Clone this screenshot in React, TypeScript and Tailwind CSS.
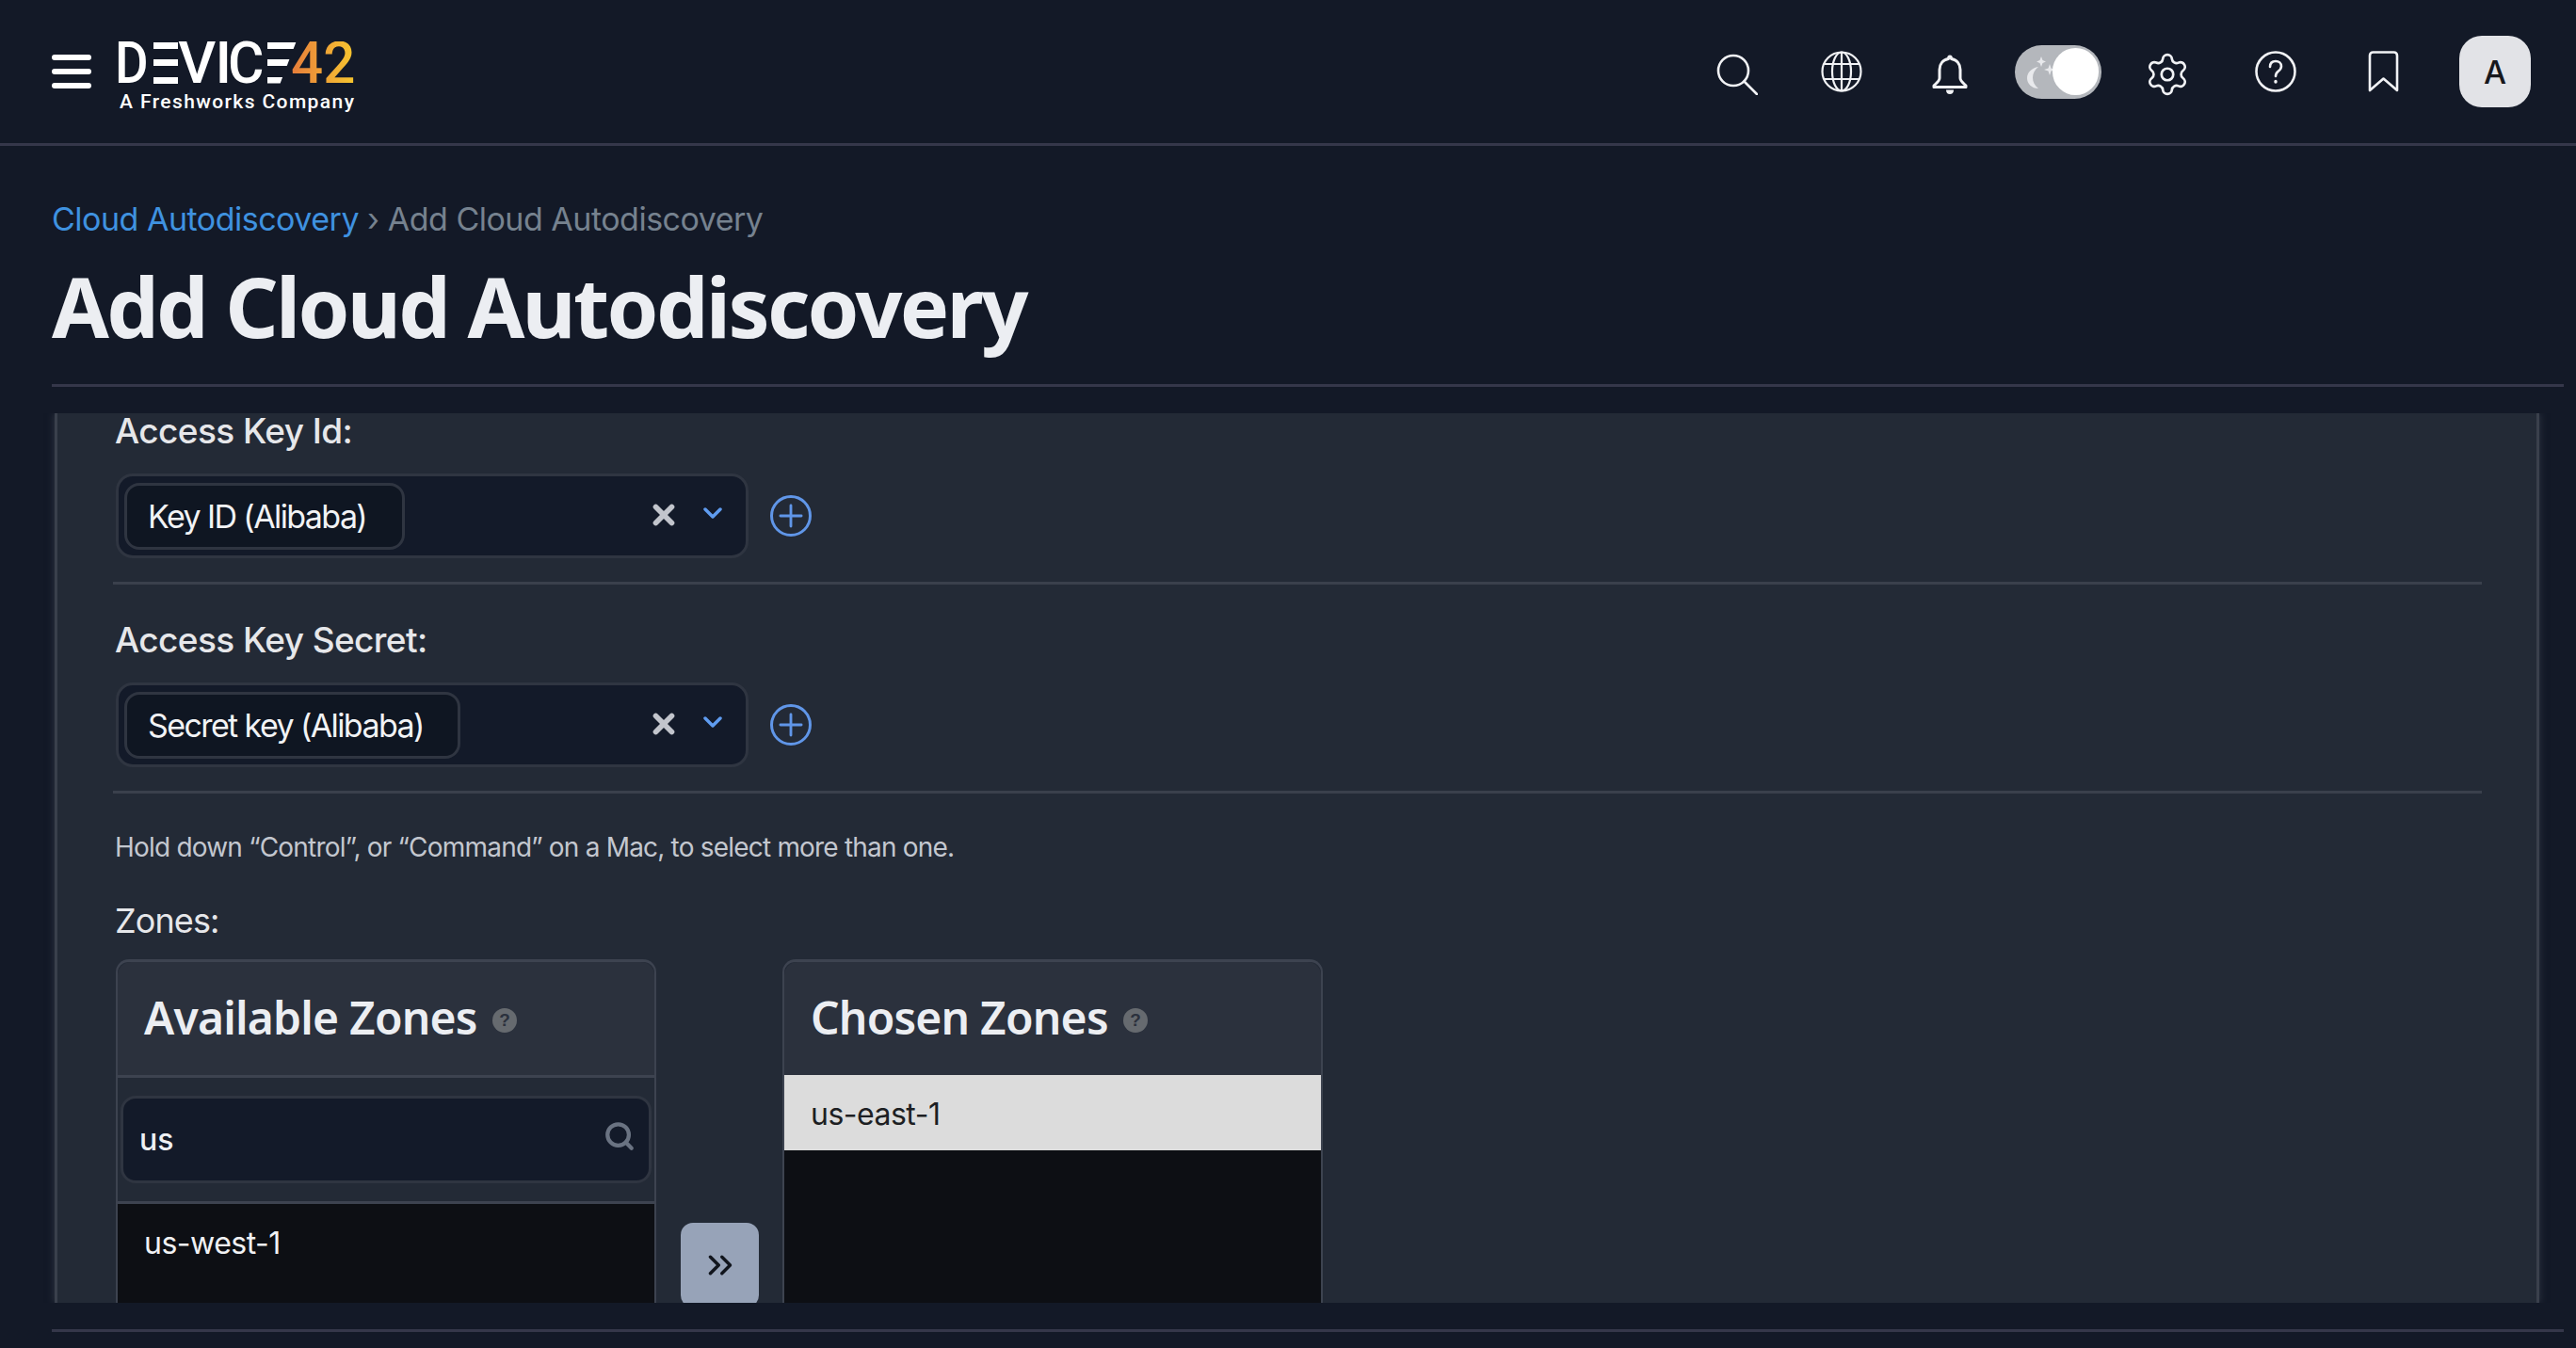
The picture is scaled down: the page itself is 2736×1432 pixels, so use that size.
import React from "react";
import { ChevronDown, ChevronsRight, Plus, Search, X } from "lucide-react";

const Bars = ({ width, className = "" }: { width: number; className?: string }) => (
  <div className={`flex h-[44px] flex-col justify-between ${className}`} style={{ width }} aria-hidden="true">
    <div className="h-[7px] bg-white" />
    <div className="h-[7px] bg-white" />
    <div className="h-[7px] bg-white" />
  </div>
);

const Logo = () => (
  <div className="mt-[12px] ml-[30px] flex w-[252px] flex-col">
    <div className="flex h-[46px] items-center font-['Roboto',sans-serif] text-[62px] leading-[46px] font-medium text-white">
      <span className="ml-[-5px] inline-block w-[43px] origin-left scale-x-[0.88]">D</span>
      <Bars width={27} />
      <span className="w-[44px]">V</span>
      <span className="ml-[-3px] w-[17px]">I</span>
      <span className="ml-[-4px] inline-block w-[44px] origin-left scale-x-[0.95]">C</span>
      <Bars width={32} className="[clip-path:polygon(0_0,100%_0,45%_100%,0_100%)]" />
      <span className="ml-[-6px] inline-block origin-left scale-x-[0.97] bg-gradient-to-r from-[#e67c3a] to-[#f6c62e] bg-clip-text text-transparent">42</span>
    </div>
    <div className="mt-[5px] font-['Roboto',sans-serif] text-[21px] leading-[26px] font-medium tracking-[1.4px] text-white">
      A Freshworks Company
    </div>
  </div>
);

const HeaderIcons = () => (
  <div className="ml-auto flex items-center pr-[48px] text-[#f1f2f5]">
    <svg className="mt-[5px]" width="44" height="44" viewBox="0 0 44 44" fill="none" stroke="currentColor" strokeWidth="2.6" strokeLinecap="round">
      <circle cx="18" cy="18" r="16" />
      <path d="M29.5 29.5 43 43" />
    </svg>
    <svg className="ml-[67px]" width="44" height="44" viewBox="0 0 44 44" fill="none" stroke="currentColor" strokeWidth="2.2">
      <circle cx="22" cy="22" r="20.5" />
      <ellipse cx="22" cy="22" rx="10" ry="20.5" />
      <path d="M22 1.5v41M3.500 14h37M3.500 30h37" />
    </svg>
    <svg className="ml-[74px] mt-[6px]" width="38" height="44" viewBox="0 0 38 44" fill="none" stroke="currentColor" strokeWidth="3" strokeLinejoin="round">
      <path d="M19 3c-1 0-1.500 1-1.500 2.500C11.500 6.500 8 11 8 17v9c0 3-3 5-6 8v1.500h34V34c-3-3-6-5-6-8v-9c0-6-3.500-10.500-9.500-11.500C20.500 4 20 3 19 3Z" />
      <path d="M15 38.500h8c0 3-1.500 4.500-4 4.500s-4-1.500-4-4.500Z" fill="currentColor" stroke="none" />
    </svg>
    <div className="relative ml-[50px] h-[57px] w-[92px] rounded-full bg-[#b4b7bc]">
      <svg className="absolute top-[12px] left-[10px]" width="34" height="36" viewBox="0 0 34 36" fill="#e8e9ec">
        <path d="M15 11C8 12 3 17 3 23s5 11 12 11c-4-3-6-7-6-11.500S11 14 15 11Z" />
        <path d="M18 0l1.500 4L23 5.500 19.500 7 18 11l-1.500-4L13 5.500 16.500 4Z" />
        <path d="M27 8l1.500 4.500L33 14l-4.500 1.500L27 20l-1.500-4.500L21 14l4.500-1.500Z" />
      </svg>
      <div className="absolute top-[3px] right-[3px] h-[50px] w-[49px] rounded-full bg-white" />
    </div>
    <svg className="ml-[45px] mt-[6px]" width="50" height="50" viewBox="0 0 24 24" fill="none" stroke="currentColor" strokeWidth="1.3" strokeLinecap="round" strokeLinejoin="round">
      <path d="M9.671 4.136a2.34 2.34 0 0 1 4.659 0 2.34 2.34 0 0 0 3.319 1.915 2.34 2.34 0 0 1 2.33 4.033 2.34 2.34 0 0 0 0 3.831 2.34 2.34 0 0 1-2.33 4.033 2.34 2.34 0 0 0-3.319 1.915 2.34 2.34 0 0 1-4.659 0 2.34 2.34 0 0 0-3.32-1.915 2.34 2.34 0 0 1-2.33-4.033 2.34 2.34 0 0 0 0-3.831A2.34 2.34 0 0 1 6.35 6.051a2.34 2.34 0 0 0 3.319-1.915" />
      <circle cx="12" cy="12" r="3" />
    </svg>
    <svg className="ml-[68px]" width="44" height="44" viewBox="0 0 44 44" fill="none" stroke="currentColor" strokeWidth="2.6" strokeLinecap="round" strokeLinejoin="round">
      <circle cx="22" cy="22" r="20.500" />
      <path d="M16 17c0-4 2.500-6 6-6s6 2 6 5.500c0 2.500-1.500 3.800-3.300 5.200C23 23 22 24 22 27" />
      <path d="M22 32.500v.5" strokeWidth="3.4" />
    </svg>
    <svg className="ml-[76px]" width="33" height="44" viewBox="0 0 33 44" fill="none" stroke="currentColor" strokeWidth="2.6" strokeLinejoin="round">
      <path d="M2 42V5c0-2 1.500-3.500 3.500-3.500h22c2 0 3.500 1.500 3.500 3.500v37L16.500 29.500Z" />
    </svg>
    <div className="ml-[64px] flex h-[76px] w-[76px] items-center justify-center rounded-[24px] bg-[#e2e3e7] font-['Inter',sans-serif] text-[34px] font-medium text-[#17181c]">
      A
    </div>
  </div>
);

const SelectField = ({ label, value, chipWidth, top }: { label: string; value: string; chipWidth: number; top: string }) => (
  <div className={`border-b-[3px] border-[#3a404c] pb-[25px] ${top}`}>
    <div className="ml-[2px] h-[38px] text-[37px] leading-[38px] font-medium tracking-[-0.6px] text-[#e6e7ea]">{label}</div>
    <div className="mt-[26px] flex items-center">
      <div className="ml-[3px] flex h-[90px] w-[672px] items-center rounded-[18px] border-[3px] border-[#2f3541] bg-[#131a29] pl-[6px]">
        <div
          className="flex h-[71px] items-center rounded-[16px] border-[3px] border-[#2f3541] bg-[#0f1622] pl-[22px] text-[34px] tracking-[-1.6px] text-[#f2f3f5]"
          style={{ width: chipWidth }}
        >
          {value}
        </div>
        <X className="mt-[-2px] ml-auto text-[#c2c5cc]" size={34} strokeWidth={4} />
        <ChevronDown className="mt-[-6px] mr-[19px] ml-[19px] text-[#5f9cf0]" size={32} strokeWidth={2.6} />
      </div>
      <div className="ml-[23px] flex h-[44px] w-[44px] items-center justify-center rounded-full border-[3px] border-[#6096e8] text-[#6096e8]">
        <Plus size={38} strokeWidth={1.8} className="shrink-0" />
      </div>
    </div>
  </div>
);

const HelpDot = () => (
  <span className="mt-[6px] ml-[16px] flex h-[26px] w-[26px] items-center justify-center rounded-full bg-[#666a6f] font-['Liberation_Sans',sans-serif] text-[19px] leading-none font-bold text-[#2b313d]">
    ?
  </span>
);

const BoxHeader = ({ title }: { title: string }) => (
  <div className="flex h-[120px] items-center rounded-t-[14px] bg-[#2b313d] pb-[3px] pl-[28px] font-['Noto_Sans',sans-serif] text-[48px] font-semibold tracking-[-0.8px] text-[#eceef2]">
    {title}
    <HelpDot />
  </div>
);

export default function App() {
  return (
    <div className="flex h-[1432px] w-[2736px] flex-col overflow-hidden bg-[#131927] font-['Inter',sans-serif]">
      <header className="flex h-[155px] shrink-0 items-center border-b-[3px] border-[#35374a] pl-[55px]">
        <div className="flex h-[36px] w-[42px] flex-col justify-between">
          <div className="h-[6px] rounded-full bg-white" />
          <div className="h-[6px] rounded-full bg-white" />
          <div className="h-[6px] rounded-full bg-white" />
        </div>
        <Logo />
        <HeaderIcons />
      </header>

      <main className="flex min-h-0 flex-1 flex-col pr-[13px] pl-[55px]">
        <div className="flex h-[256px] shrink-0 flex-col border-b-[3px] border-[#35374a]">
          <div className="mt-[56px] h-[44px] text-[34px] leading-[44px] tracking-[-0.5px] text-[#76828f]">
            <span className="text-[#3f92e0]">Cloud Autodiscovery</span> › Add Cloud Autodiscovery
          </div>
          <h1 className="mt-[22px] font-['Noto_Sans',sans-serif] text-[88px] leading-[96px] font-bold tracking-[-2.7px] text-[#eceef2]">
            Add Cloud Autodiscovery
          </h1>
        </div>

        <section className="mt-[28px] mr-[26px] ml-[3px] h-[945px] shrink-0 border-x-[3px] border-[#3a404c] bg-[#232a36] pr-[58px] pl-[59px] shadow-[0_0_8px_rgba(70,76,90,0.6)] [clip-path:inset(0_-12px_0_-12px)]">
          <SelectField label="Access Key Id:" value="Key ID (Alibaba)" chipWidth={298} top="" />
          <SelectField label="Access Key Secret:" value="Secret key (Alibaba)" chipWidth={357} top="mt-[40px]" />
          <p className="mt-[37px] ml-[2px] text-[28px] leading-[40px] tracking-[-0.8px] text-[#c3c7cf]">
            Hold down “Control”, or “Command” on a Mac, to select more than one.
          </p>
          <div className="mt-[40px] ml-[2px] h-[36px] text-[36px] leading-[36px] tracking-[-0.9px] text-[#e6e7ea]">Zones:</div>

          <div className="mt-[23px] ml-[3px] flex h-[366px] items-start overflow-hidden">
            <div className="w-[574px] rounded-t-[14px] border-x-[2px] border-t-[3px] border-[#3d4350]">
              <BoxHeader title="Available Zones" />
              <div className="border-y-[3px] border-[#3d4350] bg-[#232a36] px-[3px] py-[19px]">
                <div className="flex h-[93px] items-center justify-between rounded-[16px] border-[3px] border-[#2f3541] bg-[#131a29] pr-[14px] pl-[17px] text-[32px] font-medium text-[#eef0f3]">
                  us
                  <Search className="mt-[-8px] text-[#6a7382]" size={34} strokeWidth={3} />
                </div>
              </div>
              <div className="h-[120px] bg-[#0d0f14] px-[28px] pt-[21px] text-[32px] leading-[42px] tracking-[-0.5px] text-[#f0f1f3]">
                us-west-1
              </div>
            </div>

            <div className="mt-[280px] ml-[26px] flex h-[90px] w-[83px] shrink-0 items-center justify-center rounded-[13px] bg-[#97a3b8] text-[#11151d]">
              <ChevronsRight size={42} strokeWidth={2} />
            </div>

            <div className="ml-[25px] w-[574px] rounded-t-[14px] border-x-[2px] border-t-[3px] border-[#3d4350]">
              <BoxHeader title="Chosen Zones" />
              <div className="h-[80px] bg-[#dcdcdc] pt-[21px] pl-[28px] text-[32px] leading-[42px] tracking-[-0.5px] text-[#1d1f23]">
                us-east-1
              </div>
              <div className="h-[170px] bg-[#0d0f14]" />
            </div>
          </div>
        </section>

        <div className="mt-[28px] border-b-[3px] border-[#35374a]" />
      </main>
    </div>
  );
}
